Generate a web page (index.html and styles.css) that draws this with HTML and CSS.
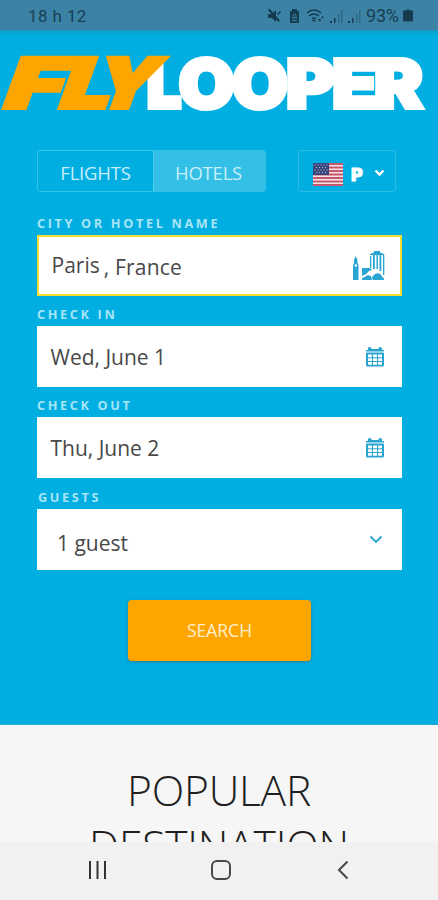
FILE: index.html
```html
<!DOCTYPE html>
<html lang="en">
<head>
<meta charset="utf-8">
<title>Flylooper</title>
<link rel="stylesheet" href="styles.css">
</head>
<body>
<div class="screen">
  <header class="status">
    <span class="clock">18 h 12</span>
    <svg class="status-icons" width="98" height="20" viewBox="0 0 98 20" fill="#143b50">
      <path d="M2 8h4l4-4v12l-4-4H2zM11 8l3-3 1 1-3 3zM2 4l1.500-1.500 10.500 12-1.500 1.500z"/>
      <path d="M24 5h2V3h5v2h2v12h-9z"/>
      <path d="M26 12h5M27 12v-3q1.500-2 3 0v3M26 14.500h5" fill="none" stroke="#3c82a4"/>
      <g fill="none" stroke="#143b50" stroke-width="1.500"><path d="M41 7q7-6 14 0M43 10q5-4 10 0M46 13q2-2 4 0"/></g>
      <path d="M46 14h4l-2 2zM52 13l2 3 1-3zM55 12l1.500-2 1.500 2z"/>
      <path d="M64 15h2v2h-2zM68 12h1.500v5H68z"/><path opacity=".35" d="M72 8h1.500v9H72zM75 4h1.500v13H75z"/>
      <path d="M82 15h2v2h-2zM86 12h1.500v5H86z"/><path opacity=".35" d="M90 8h1.500v9H90zM93 4h1.500v13H93z"/>
    </svg>
    <span class="percent">93%</span>
    <svg width="10" height="14" viewBox="0 0 11 14" fill="#143b50"><path d="M3 0h5v1h2q1 0 1 1v10q0 1-1 1H1q-1 0-1-1V2q0-1 1-1h2z"/></svg>
  </header>

  <main class="hero">
    <svg class="logo" width="438" height="72" viewBox="0 0 438 72">
      <g class="looper">
        <text x="146.500" y="64.500" textLength="35" lengthAdjust="spacingAndGlyphs">L</text>
        <text x="178.500" y="64.500" textLength="56" lengthAdjust="spacingAndGlyphs">O</text>
        <text x="232" y="64.500" textLength="56" lengthAdjust="spacingAndGlyphs">O</text>
        <text x="286" y="64.500" textLength="49" lengthAdjust="spacingAndGlyphs">P</text>
        <text x="332" y="64.500" textLength="45" lengthAdjust="spacingAndGlyphs">E</text>
        <text x="374" y="64.500" textLength="49" lengthAdjust="spacingAndGlyphs">R</text>
      </g>
      <g class="fly" transform="translate(0 64.500) skewX(-20)">
        <text x="0" y="0" textLength="58" lengthAdjust="spacingAndGlyphs">F</text>
        <text x="56" y="0" textLength="50" lengthAdjust="spacingAndGlyphs">L</text>
        <text x="89" y="0" textLength="61" lengthAdjust="spacingAndGlyphs">Y</text>
      </g>
    </svg>

    <div class="controls">
      <div class="tabs">
        <button class="tab">FLIGHTS</button>
        <button class="tab active">HOTELS</button>
      </div>
      <button class="locale">
        <svg width="30" height="23" viewBox="0 0 30 23">
          <rect width="30" height="23" rx="1" fill="#f3e6ea"/>
          <path d="M0 1h30M0 4.500h30M0 8h30M0 11.500h30M0 15h30M0 18.500h30M0 22h30" stroke="#c8566a" stroke-width="1.800"/>
          <rect width="16" height="12" fill="#39477d"/>
          <path d="M1.500 2h14M3 4.500h12M1.500 7h14M3 9.500h12" stroke="#b9bfd8" stroke-width="1" stroke-dasharray="1 2"/>
        </svg>
        <span class="currency">P</span>
        <svg class="caret" width="11" height="8" viewBox="0 0 11 8"><path d="M1.500 1.500l4 4 4-4" fill="none" stroke="#fff" stroke-width="2.400"/></svg>
      </button>
    </div>

    <form class="search">
      <label class="label">CITY OR HOTEL NAME</label>
      <div class="field focus">
        <span class="value city"><span class="town">Paris</span><span class="country">, France</span></span>
        <svg class="city-icon" width="32" height="30" viewBox="0 0 32 30" fill="#28a5d2">
          <path d="M0 29V14l1-2V9l1.700-4L4.500 9v3l1 2v15z"/><circle cx="2.800" cy="14.500" r="1.200" fill="#fff"/>
          <path d="M9 25v-8h8l2 2-3 1-3 3z"/>
          <path d="M17 3l4-1.500V0h6v1.500L31 3v1H17zM17 5h1.300v12H17zM20 4h1.800v14H20zM23.500 4h1.500v14h-1.500zM26.500 4h1.800v16h-1.800zM30 4h1.300v20H30z"/>
          <path d="M9 29q0-3 3-3 2-3 6-1l1 4zM20 29q-2-3 0-4 3-4 7-2 2 1 2 3 2 0 2 3z"/>
        </svg>
      </div>
      <label class="label">CHECK IN</label>
      <div class="field">
        <span class="value">Wed, June 1</span>
        <svg class="cal" width="18" height="21" viewBox="0 0 18 21" fill="#28a5cf">
          <path d="M0 4h2V2q1.500-2 3.500 0v1h7V2q2-2 3.500 0v2h2v1.500H0z"/>
          <path fill-rule="evenodd" d="M1 6.500h16q1 0 1 1V19q0 1.500-1.500 1.500h-15Q0 20.500 0 19V7.500q0-1 1-1zM2 8.500v2.700h3.900V8.500zm5 0v2.700h4V8.500zm5.100 0v2.700H16V8.500zM2 12.300v2.600h3.900v-2.600zm5 0v2.600h4v-2.600zm5.100 0v2.600H16v-2.600zM2 16v2.700h3.900V16zm5 0v2.700h4V16zm5.100 0v2.700H16V16z"/>
        </svg>
      </div>
      <label class="label">CHECK OUT</label>
      <div class="field">
        <span class="value">Thu, June 2</span>
        <svg class="cal" width="18" height="21" viewBox="0 0 18 21" fill="#28a5cf">
          <path d="M0 4h2V2q1.500-2 3.500 0v1h7V2q2-2 3.500 0v2h2v1.500H0z"/>
          <path fill-rule="evenodd" d="M1 6.500h16q1 0 1 1V19q0 1.500-1.500 1.500h-15Q0 20.500 0 19V7.500q0-1 1-1zM2 8.500v2.700h3.900V8.500zm5 0v2.700h4V8.500zm5.100 0v2.700H16V8.500zM2 12.300v2.600h3.900v-2.600zm5 0v2.600h4v-2.600zm5.100 0v2.600H16v-2.600zM2 16v2.700h3.900V16zm5 0v2.700h4V16zm5.100 0v2.700H16V16z"/>
        </svg>
      </div>
      <label class="label guests-label">GUESTS</label>
      <div class="field guests">
        <span class="value">1 guest</span>
        <svg width="14" height="9" viewBox="0 0 14 9"><path d="M1.500 1.500L7 7l5.500-5.500" fill="none" stroke="#28a5cf" stroke-width="1.800"/></svg>
      </div>
      <button class="submit" type="button">SEARCH</button>
    </form>
  </main>

  <section class="popular">
    <h2>POPULAR<br>DESTINATION</h2>
  </section>

  <nav class="navbar">
    <svg width="20" height="20" viewBox="0 0 20 20"><path d="M2 1v18M9.500 1v18M17 1v18" stroke="#333" stroke-width="2"/></svg>
    <svg class="home" width="22" height="22" viewBox="0 0 22 22"><rect x="2" y="2" width="18" height="18" rx="5" fill="none" stroke="#484848" stroke-width="2"/></svg>
    <svg width="12" height="20" viewBox="0 0 12 20"><path d="M10.500 1.500L2 10l8.500 8.500" fill="none" stroke="#484848" stroke-width="2"/></svg>
  </nav>
</div>
</body>
</html>
```
FILE: styles.css
```css
* { box-sizing: border-box; }
body { margin: 0; font-family: "Open Sans", sans-serif; }
button { font-family: inherit; padding: 0; margin: 0; }
svg { flex: none; display: block; }
.screen { width: 438px; height: 900px; display: flex; flex-direction: column; overflow: hidden; background: #f6f6f6; }

.status { flex: none; height: 30px; display: flex; align-items: center; padding: 1px 25px 0 28px; background: #3c82a4; color: #163f55; font-family: Roboto, sans-serif; }
.clock { flex: 1; font-size: 17px; letter-spacing: .4px; }
.status-icons { margin-right: 2px; }
.percent { width: 37px; font-size: 18px; letter-spacing: -.2px; }

.hero { flex: none; height: 695px; background: linear-gradient(#1799c2, #00aee2 5px); border-bottom: 1px solid #2ba9d2; }
.logo { margin-top: 13px; overflow: visible; }
.logo text { font-family: Inter, sans-serif; font-weight: 900; }
.looper { font-size: 67px; fill: #fff; stroke: #fff; stroke-width: 4; }
.fly { font-size: 69px; fill: #ffa500; stroke: #ffa500; stroke-width: 4; }

.controls { display: flex; justify-content: space-between; margin: 35px 42px 0 37px; }
.tabs { display: flex; width: 229px; height: 42px; border: 1px solid #35c0e8; border-radius: 3px; }
.tab { width: 115px; border: 0; background: none; color: #c8effa; font-size: 18.5px; font-weight: 400; letter-spacing: -.2px; padding-top: 3px; }
.tab.active { flex: 1; background: #33bfe6; border-left: 1px solid #52cbeb; padding-right: 2px; }
.locale { display: flex; align-items: center; width: 98px; height: 42px; padding: 7px 0 0 14px; background: none; border: 1px solid #30bbe4; border-radius: 3px; color: #fff; }
.currency { margin-left: 7px; width: 14px; font-family: Inter, sans-serif; font-size: 18px; font-weight: 900; line-height: 20px; -webkit-text-stroke: .8px #fff; }
.caret { margin-left: 10px; margin-top: -4px; }

.search { display: flex; flex-direction: column; margin: 21px 36px 0 37px; }
.label { height: 22px; line-height: 20px; color: #a9e5f6; font-size: 12.7px; font-weight: 700; letter-spacing: 2.65px; white-space: nowrap; }
.guests-label { padding-left: 1px; }
.field { display: flex; align-items: center; justify-content: space-between; height: 61px; margin-bottom: 8.2px; padding: 0 18px 0 13.500px; background: #fff; }
.focus { padding: 0 15px 0 12.500px; border: 2px solid #f5df2e; }
.value { font-size: 21px; font-weight: 400; color: #484848; white-space: nowrap; }
.city { display: flex; }
.country { padding: 2px 0 0 4px; letter-spacing: .2px; }
.guests { padding: 0 19px 0 20px; }
.guests .value { padding-top: 8px; }
.submit { align-self: center; width: 183px; height: 61px; margin-top: 22px; border: 0; border-radius: 4px; background: #ffa500; color: #fff0cf; font-size: 17.5px; box-shadow: 0 1px 3px #287f9c; }

.popular { height: 117px; overflow: hidden; }
.popular h2 { margin: 37px 0 0; text-align: center; font-size: 42.5px; line-height: 55px; letter-spacing: -.2px; font-weight: 300; color: #202020; }
.navbar { flex: none; height: 58px; display: flex; align-items: center; justify-content: space-between; padding: 0 89px 2px 88px; background: #f1f1f1; }
.home { margin-right: 4px; }
```
